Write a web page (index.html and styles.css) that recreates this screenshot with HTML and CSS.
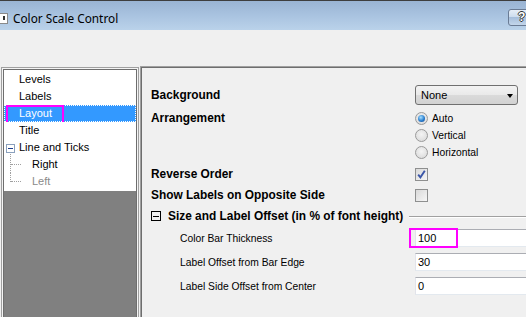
FILE: index.html
```html
<!DOCTYPE html>
<html>
<head>
<meta charset="utf-8">
<link rel="stylesheet" href="styles.css">
</head>
<body>
<div class="window">
  <div class="titlebar">
    <div class="appicon"><span class="bang"></span></div>
    <div class="title">Color Scale Control</div>
    <div class="help">?</div>
  </div>
  <div class="spacer"></div>
  <div class="main">
    <div class="leftpanel">
      <div class="tree">
        <div class="item">Levels</div>
        <div class="item">Labels</div>
        <div class="item selected">Layout<span class="mark mark-layout"></span></div>
        <div class="item">Title</div>
        <div class="item parent"><span class="expander"></span>Line and Ticks</div>
        <div class="item child"><span class="branch"></span>Right</div>
        <div class="item child disabled"><span class="branch last"></span>Left</div>
        <div class="treefill"></div>
      </div>
    </div>
    <div class="rightpanel">
      <div class="row r-bg">
        <div class="lbl b">Background</div>
        <div class="ctl"><div class="select">None<span class="arrow"></span></div></div>
      </div>
      <div class="row r-arr">
        <div class="lbl b">Arrangement</div>
        <div class="ctl radios">
          <div class="radio on"><span class="dot"></span>Auto</div>
          <div class="radio"><span class="dot"></span>Vertical</div>
          <div class="radio"><span class="dot"></span>Horizontal</div>
        </div>
      </div>
      <div class="row r-rev">
        <div class="lbl b">Reverse Order</div>
        <div class="ctl"><span class="check on"><svg width="11" height="11" viewBox="0 0 11 11"><path d="M2.2 5.6 L4.4 8.3 L8.8 1.8" fill="none" stroke="#3b56a8" stroke-width="1.9"/></svg></span></div>
      </div>
      <div class="row r-show">
        <div class="lbl b">Show Labels on Opposite Side</div>
        <div class="ctl"><span class="check"></span></div>
      </div>
      <div class="section">
        <span class="collapse"></span>
        <span class="b">Size and Label Offset (in % of font height)</span>
        <span class="rule"></span>
      </div>
      <div class="row r-in first">
        <div class="lbl sub">Color Bar Thickness</div>
        <div class="ctl"><div class="input">100</div><span class="mark mark-input"></span></div>
      </div>
      <div class="row r-in">
        <div class="lbl sub">Label Offset from Bar Edge</div>
        <div class="ctl"><div class="input">30</div></div>
      </div>
      <div class="row r-in">
        <div class="lbl sub">Label Side Offset from Center</div>
        <div class="ctl"><div class="input">0</div></div>
      </div>
    </div>
  </div>
</div>
</body>
</html>
```
FILE: styles.css
```css
html, body {
  margin: 0;
  padding: 0;
}
body {
  width: 526px;
  height: 317px;
  overflow: hidden;
  background: #f0f0f0;
  font-family: "Liberation Sans", Arial, sans-serif;
  color: #000;
}
.window {
  width: 526px;
  height: 317px;
  display: flex;
  flex-direction: column;
  overflow: hidden;
}
.titlebar {
  height: 30px;
  flex: none;
  box-sizing: border-box;
  border-top: 1px solid #3e3e3e;
  background: linear-gradient(#9ab4d3, #a9c3e0 50%, #bad2ea);
  display: flex;
  align-items: center;
  padding-top: 4px;
  overflow: hidden;
}
.appicon {
  width: 8px;
  height: 11px;
  box-sizing: border-box;
  background: #fff;
  border: 1px solid #8a8a8a;
  border-left: none;
  position: relative;
  margin-top: 1px;
}
.bang {
  position: absolute;
  left: 3px;
  top: 2px;
  width: 2px;
  height: 4px;
  background: #333;
}
.title {
  margin-left: 5px;
  font-family: "Noto Sans", "Open Sans", sans-serif;
  font-size: 11.8px;
  color: #000;
}
.help {
  margin-left: auto;
  margin-right: -14px;
  width: 32px;
  height: 17px;
  box-sizing: border-box;
  border: 1px solid #6a7b94;
  border-radius: 3px;
  background: linear-gradient(#e6eef7, #cdddee 45%, #a6bedb 50%, #c3d6eb);
  font-weight: bold;
  font-size: 12px;
  line-height: 15px;
  padding-left: 9px;
  color: #fff;
  text-shadow: 1px 0 #333, -1px 0 #333, 0 1px #333, 0 -1px #333;
}
.spacer {
  height: 36px;
  flex: none;
}
.main {
  flex: 1;
  display: flex;
  min-height: 0;
}
.leftpanel {
  width: 138px;
  margin-left: 1px;
  margin-top: 1px;
  box-sizing: border-box;
  border: 1px solid #a0a0a0;
  border-bottom: none;
  padding: 1px 1px 0 1px;
  background: #f4f4f4;
  display: flex;
}
.tree {
  flex: 1;
  border: 1px solid #6e6e6e;
  border-bottom: none;
  display: flex;
  flex-direction: column;
  font-size: 11px;
  background: #fff;
  padding-top: 1px;
}
.item {
  height: 17px;
  line-height: 17px;
  padding-left: 15px;
  background: #fff;
  position: relative;
  white-space: nowrap;
}
.item.selected {
  background: #3399ff;
  color: #fff;
  outline: 1px dotted #fff;
  outline-offset: -1px;
}
.item.child {
  padding-left: 28px;
}
.item.disabled {
  color: #8a8a8a;
}
.expander {
  position: absolute;
  left: 2px;
  top: 5px;
  width: 9px;
  height: 9px;
  box-sizing: border-box;
  border: 1px solid #8aa0bd;
  background: #fff;
}
.expander::after {
  content: "";
  position: absolute;
  left: 1px;
  top: 3px;
  width: 5px;
  height: 1px;
  background: #1c3c8c;
}
.branch {
  position: absolute;
  left: 6px;
  top: -2px;
  height: 19px;
  border-left: 1px dotted #a0a0a0;
}
.branch.last {
  top: 0;
  height: 9px;
}
.branch::after {
  content: "";
  position: absolute;
  left: 0;
  top: 10px;
  width: 10px;
  border-top: 1px dotted #a0a0a0;
}
.branch.last::after {
  top: 8px;
}
.treefill {
  flex: 1;
  background: #808080;
  margin-top: 1px;
}
.mark {
  position: absolute;
  box-sizing: border-box;
  border: 2px solid #ff00ff;
  pointer-events: none;
}
.mark-layout {
  left: 2px;
  top: 0;
  width: 58px;
  height: 19px;
}
.rightpanel {
  flex: 1;
  margin-left: 1px;
  border-left: 1px solid #a0a0a0;
  border-top: 1px solid #a0a0a0;
  box-shadow: inset 1px 1px 0 #6e6e6e;
  padding: 17px 0 0 10px;
  font-size: 10.3px;
  min-width: 0;
}
.row {
  display: flex;
  align-items: center;
}
.lbl {
  width: 264px;
  flex: none;
  white-space: nowrap;
}
.b {
  font-weight: bold;
  font-size: 11.9px;
}
.ctl {
  position: relative;
  flex: none;
}
.r-bg {
  height: 21px;
}
.select {
  width: 103px;
  height: 20px;
  box-sizing: border-box;
  border: 1px solid #707070;
  border-radius: 3px;
  background: linear-gradient(#f3f3f3, #e9e9e9 50%, #dadada 51%, #d2d2d2);
  font-size: 11px;
  line-height: 18px;
  padding-left: 5px;
  position: relative;
}
.arrow {
  position: absolute;
  right: 4px;
  top: 8px;
  width: 0;
  height: 0;
  border-left: 3.5px solid transparent;
  border-right: 3.5px solid transparent;
  border-top: 4px solid #000;
}
.r-arr {
  margin-top: 5px;
  align-items: flex-start;
}
.r-arr .lbl {
  height: 17px;
  line-height: 17px;
}
.radios {
  display: flex;
  flex-direction: column;
}
.radio {
  height: 17px;
  display: flex;
  align-items: center;
  white-space: nowrap;
}
.radio .dot {
  width: 13px;
  height: 13px;
  box-sizing: border-box;
  border-radius: 50%;
  border: 1px solid #9a9a9a;
  background: radial-gradient(circle at 50% 40%, #f4f4f4, #d6d6d6);
  margin-right: 4px;
  position: relative;
  flex: none;
}
.radio.on .dot::after {
  content: "";
  position: absolute;
  left: 2px;
  top: 2px;
  width: 7px;
  height: 7px;
  border-radius: 50%;
  background: radial-gradient(circle at 40% 35%, #a8e0ff, #2a7fd0 55%, #0e3f86);
}
.r-rev {
  height: 18px;
  margin-top: 4px;
}
.r-show {
  height: 18px;
  margin-top: 3px;
}
.check {
  display: block;
  width: 13px;
  height: 13px;
  box-sizing: border-box;
  border: 1px solid #8e8f8f;
  background: linear-gradient(135deg, #d9d9d9, #f6f6f6);
  position: relative;
}
.check svg {
  position: absolute;
  left: 0;
  top: 0;
}
.section {
  height: 18px;
  margin-top: 3px;
  display: flex;
  align-items: center;
}
.collapse {
  width: 10px;
  height: 10px;
  box-sizing: border-box;
  border: 1px solid #000;
  position: relative;
  margin-right: 7px;
  flex: none;
}
.collapse::after {
  content: "";
  position: absolute;
  left: 1px;
  top: 3.5px;
  width: 6px;
  height: 1px;
  background: #000;
}
.section .b {
  white-space: nowrap;
}
.rule {
  flex: 1;
  height: 1px;
  background: #a0a0a0;
  margin-left: 6px;
  box-shadow: 0 1px 0 #fff;
}
.r-in {
  height: 18px;
  margin-top: 6px;
}
.r-in.first {
  margin-top: 4px;
}
.lbl.sub {
  padding-left: 29px;
  box-sizing: border-box;
}
.input {
  width: 120px;
  height: 18px;
  box-sizing: border-box;
  background: #fff;
  border-top: 1px solid #abadb3;
  border-left: 1px solid #e2e3ea;
  border-bottom: 1px solid #e3e9ef;
  font-size: 11px;
  line-height: 16px;
  padding-left: 2px;
}
.mark-input {
  left: -6px;
  top: -1px;
  width: 49px;
  height: 20px;
}
```
